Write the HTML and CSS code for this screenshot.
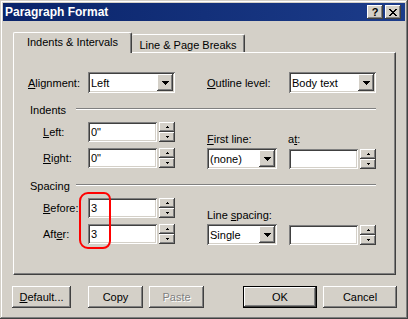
FILE: index.html
```html
<!DOCTYPE html>
<html lang="en">
<head>
    <meta charset="UTF-8">
    <meta name="viewport" content="width=device-width, initial-scale=1.0">
    <title>Paragraph Format</title>
    <link rel="stylesheet" href="styles.css">
</head>
<body>
<div class="window">
    <div class="titlebar">
        <span class="title">Paragraph Format</span>
        <div class="caption-buttons">
            <div class="cap-btn raised"><span class="help-glyph">?</span></div>
            <div class="cap-btn raised">
                <svg width="8" height="7" viewBox="0 0 8 7" shape-rendering="crispEdges"><path d="M0 0h2v1H0zM6 0h2v1H6zM1 1h2v1H1zM5 1h2v1H5zM2 2h4v1H2zM3 3h2v1H3zM2 4h4v1H2zM1 5h2v1H1zM5 5h2v1H5zM0 6h2v1H0zM6 6h2v1H6z"/></svg>
            </div>
        </div>
    </div>

    <div class="client">
        <div class="tabs">
            <div class="tab tab-active">Indents &amp; Intervals</div>
            <div class="tab">Line &amp; Page Breaks</div>
        </div>

        <div class="panel">
            <div class="row">
                <span class="lbl lbl-main"><u>A</u>lignment:</span>
                <div class="combo combo-wide sunken">
                    <span class="value">Left</span>
                    <span class="drop raised"><svg width="7" height="4" viewBox="0 0 7 4" shape-rendering="crispEdges"><path d="M0 0h7v1H0zM1 1h5v1H1zM2 2h3v1H2zM3 3h1v1H3z"/></svg></span>
                </div>
                <span class="lbl lbl-right"><u>O</u>utline level:</span>
                <div class="combo combo-wide sunken">
                    <span class="value">Body text</span>
                    <span class="drop raised"><svg width="7" height="4" viewBox="0 0 7 4" shape-rendering="crispEdges"><path d="M0 0h7v1H0zM1 1h5v1H1zM2 2h3v1H2zM3 3h1v1H3z"/></svg></span>
                </div>
            </div>

            <!-- Indents -->
            <div class="group-head">
                <span class="group-title">Indents</span>
                <span class="etch"></span>
            </div>
            <div class="group">
                <div class="group-left">
                    <div class="field">
                        <span class="lbl lbl-sub"><u>L</u>eft:</span>
                        <div class="spin-edit">
                            <div class="edit sunken">0"</div>
                            <div class="spinner">
                                <span class="spin-btn raised"><svg width="3" height="2" viewBox="0 0 3 2" shape-rendering="crispEdges"><path d="M1 0h1v1H1zM0 1h3v1H0z"/></svg></span>
                                <span class="spin-btn raised"><svg width="3" height="2" viewBox="0 0 3 2" shape-rendering="crispEdges"><path d="M0 0h3v1H0zM1 1h1v1H1z"/></svg></span>
                            </div>
                        </div>
                    </div>
                    <div class="field">
                        <span class="lbl lbl-sub"><u>R</u>ight:</span>
                        <div class="spin-edit">
                            <div class="edit sunken">0"</div>
                            <div class="spinner">
                                <span class="spin-btn raised"><svg width="3" height="2" viewBox="0 0 3 2" shape-rendering="crispEdges"><path d="M1 0h1v1H1zM0 1h3v1H0z"/></svg></span>
                                <span class="spin-btn raised"><svg width="3" height="2" viewBox="0 0 3 2" shape-rendering="crispEdges"><path d="M0 0h3v1H0zM1 1h1v1H1z"/></svg></span>
                            </div>
                        </div>
                    </div>
                </div>
                <div class="group-right">
                    <div class="pair-labels">
                        <span class="lbl lbl-combo"><u>F</u>irst line:</span>
                        <span class="lbl">a<u>t</u>:</span>
                    </div>
                    <div class="pair-controls">
                        <div class="combo combo-narrow sunken">
                            <span class="value">(none)</span>
                            <span class="drop raised"><svg width="7" height="4" viewBox="0 0 7 4" shape-rendering="crispEdges"><path d="M0 0h7v1H0zM1 1h5v1H1zM2 2h3v1H2zM3 3h1v1H3z"/></svg></span>
                        </div>
                        <div class="spin-edit">
                            <div class="edit sunken"></div>
                            <div class="spinner">
                                <span class="spin-btn raised"><svg width="3" height="2" viewBox="0 0 3 2" shape-rendering="crispEdges"><path d="M1 0h1v1H1zM0 1h3v1H0z"/></svg></span>
                                <span class="spin-btn raised"><svg width="3" height="2" viewBox="0 0 3 2" shape-rendering="crispEdges"><path d="M0 0h3v1H0zM1 1h1v1H1z"/></svg></span>
                            </div>
                        </div>
                    </div>
                </div>
            </div>

            <!-- Spacing -->
            <div class="group-head">
                <span class="group-title">Spacing</span>
                <span class="etch"></span>
            </div>
            <div class="group">
                <div class="group-left">
                    <div class="field">
                        <span class="lbl lbl-sub"><u>B</u>efore:</span>
                        <div class="spin-edit">
                            <div class="edit sunken">3</div>
                            <div class="spinner">
                                <span class="spin-btn raised"><svg width="3" height="2" viewBox="0 0 3 2" shape-rendering="crispEdges"><path d="M1 0h1v1H1zM0 1h3v1H0z"/></svg></span>
                                <span class="spin-btn raised"><svg width="3" height="2" viewBox="0 0 3 2" shape-rendering="crispEdges"><path d="M0 0h3v1H0zM1 1h1v1H1z"/></svg></span>
                            </div>
                        </div>
                    </div>
                    <div class="field">
                        <span class="lbl lbl-sub">Aft<u>e</u>r:</span>
                        <div class="spin-edit">
                            <div class="edit sunken">3</div>
                            <div class="spinner">
                                <span class="spin-btn raised"><svg width="3" height="2" viewBox="0 0 3 2" shape-rendering="crispEdges"><path d="M1 0h1v1H1zM0 1h3v1H0z"/></svg></span>
                                <span class="spin-btn raised"><svg width="3" height="2" viewBox="0 0 3 2" shape-rendering="crispEdges"><path d="M0 0h3v1H0zM1 1h1v1H1z"/></svg></span>
                            </div>
                        </div>
                    </div>
                </div>
                <div class="group-right">
                    <div class="pair-labels">
                        <span class="lbl">Line <u>s</u>pacing:</span>
                    </div>
                    <div class="pair-controls">
                        <div class="combo combo-narrow sunken">
                            <span class="value">Single</span>
                            <span class="drop raised"><svg width="7" height="4" viewBox="0 0 7 4" shape-rendering="crispEdges"><path d="M0 0h7v1H0zM1 1h5v1H1zM2 2h3v1H2zM3 3h1v1H3z"/></svg></span>
                        </div>
                        <div class="spin-edit">
                            <div class="edit sunken"></div>
                            <div class="spinner">
                                <span class="spin-btn raised"><svg width="3" height="2" viewBox="0 0 3 2" shape-rendering="crispEdges"><path d="M1 0h1v1H1zM0 1h3v1H0z"/></svg></span>
                                <span class="spin-btn raised"><svg width="3" height="2" viewBox="0 0 3 2" shape-rendering="crispEdges"><path d="M0 0h3v1H0zM1 1h1v1H1z"/></svg></span>
                            </div>
                        </div>
                    </div>
                </div>
            </div>

            <div class="highlight"></div>
        </div>

        <div class="buttons">
            <div class="btn raised btn-default-set"><u>D</u>efault...</div>
            <div class="btn raised btn-copy">Copy</div>
            <div class="btn raised btn-paste disabled">Paste</div>
            <div class="btn raised btn-ok is-default">OK</div>
            <div class="btn raised btn-cancel">Cancel</div>
        </div>
    </div>
</div>
</body>
</html>
```

FILE: styles.css
```css
* {
    box-sizing: border-box;
}

body {
    margin: 0;
    background: #d4d0c8;
    font-family: "Liberation Sans", Arial, sans-serif;
    font-size: 11px;
    color: #000;
}

u {
    text-decoration: underline;
    text-underline-offset: 1px;
}

/* classic 3d frames */
.raised {
    background: #d4d0c8;
    box-shadow: inset -1px -1px #404040, inset 1px 1px #fff, inset -2px -2px #808080, inset 2px 2px #d4d0c8;
}

.sunken {
    background: #fff;
    box-shadow: inset 1px 1px #808080, inset -1px -1px #fff, inset 2px 2px #404040, inset -2px -2px #d4d0c8;
}

.window {
    width: 408px;
    height: 319px;
    padding: 3px;
    background: #d4d0c8;
    box-shadow: inset -1px -1px #404040, inset 1px 1px #d4d0c8, inset -2px -2px #808080, inset 2px 2px #fff;
}

.titlebar {
    height: 18px;
    display: flex;
    align-items: center;
    padding: 0 4px 0 2px;
    background: linear-gradient(to right, #0a246a, #1c3c8a);
}

.title {
    flex: 1;
    color: #fff;
    font-weight: bold;
    font-size: 12px;
}

.caption-buttons {
    display: flex;
    gap: 2px;
}

.cap-btn {
    width: 16px;
    height: 14px;
    display: flex;
    align-items: center;
    justify-content: center;
}

.help-glyph {
    font-weight: bold;
    font-size: 11px;
    line-height: 1;
    margin-top: 1px;
}

.client {
    padding: 11px 0 0 10px;
}

/* tabs */
.tabs {
    display: flex;
    align-items: flex-end;
    height: 21px;
    position: relative;
    z-index: 1;
    margin-bottom: -1px;
}

.tab {
    height: 18px;
    width: 113px;
    display: flex;
    align-items: center;
    justify-content: center;
    padding-top: 2px;
    background: #d4d0c8;
    border-top: 1px solid #fff;
    border-right: 1px solid #404040;
    border-radius: 2px 2px 0 0;
    box-shadow: inset -1px 0 #808080;
    margin-bottom: 1px;
}

.tab-active {
    height: 21px;
    width: 119px;
    padding-top: 0;
    padding-bottom: 2px;
    border-left: 1px solid #fff;
    margin-bottom: 0;
}

.panel {
    position: relative;
    width: 383px;
    height: 223px;
    padding: 19px 0 0 14px;
    border-top: 1px solid #fff;
    border-left: 1px solid #fff;
    border-right: 1px solid #404040;
    border-bottom: 1px solid #404040;
    box-shadow: inset -1px -1px #808080;
}

.row {
    display: flex;
    align-items: center;
    height: 21px;
}

.lbl {
    white-space: nowrap;
}

.lbl-main {
    width: 60px;
}

.lbl-right {
    width: 82px;
    margin-left: 32px;
}

.lbl-sub {
    width: 60px;
    padding-left: 15px;
}

.lbl-combo {
    width: 81px;
}

/* combo boxes */
.combo {
    display: flex;
    align-items: center;
    height: 21px;
    padding: 2px;
}

.combo-wide {
    width: 87px;
}

.combo-narrow {
    width: 70px;
}

.combo .value {
    flex: 1;
    padding-left: 1px;
}

.drop {
    width: 16px;
    height: 17px;
    display: flex;
    align-items: center;
    justify-content: center;
    padding-top: 1px;
}

/* group headings */
.group-head {
    display: flex;
    width: 348px;
    height: 14px;
    margin-top: 10px;
    line-height: 14px;
}

.group-title {
    width: 48px;
    padding-left: 2px;
}

.etch {
    flex: 1;
    height: 2px;
    margin-top: 5px;
    border-top: 1px solid #808080;
    border-bottom: 1px solid #fff;
}

.group {
    display: flex;
    margin-top: 5px;
}

.group-left {
    display: flex;
    flex-direction: column;
    gap: 6px;
}

.field {
    display: flex;
    align-items: center;
    height: 20px;
}

.group-right {
    margin-left: 32px;
}

.pair-labels {
    display: flex;
    height: 14px;
    line-height: 14px;
    margin-top: 10px;
}

.pair-controls {
    display: flex;
    align-items: center;
    gap: 12px;
    margin-top: 2px;
}

/* edit + spinner */
.spin-edit {
    display: flex;
    gap: 2px;
    height: 20px;
}

.edit {
    width: 69px;
    height: 20px;
    padding: 0 3px;
    display: flex;
    align-items: center;
}

.spinner {
    display: flex;
    flex-direction: column;
    width: 16px;
}

.spin-btn {
    height: 10px;
    display: flex;
    align-items: center;
    justify-content: center;
}

.highlight {
    position: absolute;
    left: 65px;
    top: 139px;
    width: 32px;
    height: 57px;
    border: 2px solid #ff0000;
    border-radius: 9px 7px 8px 9px;
}

/* bottom buttons */
.buttons {
    display: flex;
    margin-top: 11px;
}

.btn {
    height: 22px;
    display: flex;
    align-items: center;
    justify-content: center;
}

.btn-default-set {
    width: 59px;
    margin-left: -1px;
}

.btn-copy {
    width: 55px;
    margin-left: 17px;
}

.btn-paste {
    width: 55px;
    margin-left: 6px;
}

.btn-ok {
    width: 74px;
    margin-left: 39px;
}

.btn-cancel {
    width: 74px;
    margin-left: 6px;
}

.disabled {
    color: #808080;
    text-shadow: 1px 1px #fff;
}

.is-default {
    box-shadow: inset 0 0 0 1px #000, inset -2px -2px #404040, inset 2px 2px #fff, inset -3px -3px #808080;
}
```
